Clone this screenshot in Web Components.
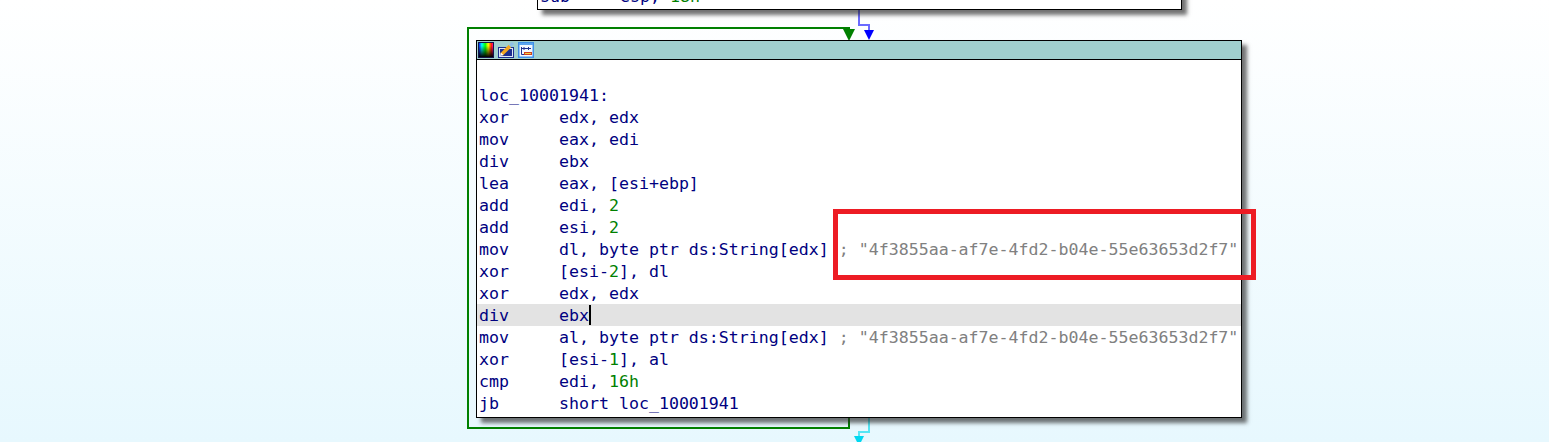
<!DOCTYPE html>
<html>
<head>
<meta charset="utf-8">
<style>
    html, body { margin: 0; height: 100%; }
    body { background: linear-gradient(#ffffff, #e7f8fe); overflow: hidden; }
</style>
</head>
<body>
<graph-view>
    <graph-edges></graph-edges>
    <graph-node style="left:537px; top:-40px; width:643px; height:48px">
        <asm-line></asm-line>
        <asm-line op="sub">esp, <n-um>18h</n-um></asm-line>
    </graph-node>
    <graph-node titled style="left:476px; top:40px; width:764px; height:376px">
        <asm-line></asm-line>
        <asm-line>loc_10001941:</asm-line>
        <asm-line op="xor">edx, edx</asm-line>
        <asm-line op="mov">eax, edi</asm-line>
        <asm-line op="div">ebx</asm-line>
        <asm-line op="lea">eax, [esi+ebp]</asm-line>
        <asm-line op="add">edi, <n-um>2</n-um></asm-line>
        <asm-line op="add">esi, <n-um>2</n-um></asm-line>
        <asm-line op="mov" note='; "4f3855aa-af7e-4fd2-b04e-55e63653d2f7"'>dl, byte ptr ds:String[edx]</asm-line>
        <asm-line op="xor">[esi-<n-um>2</n-um>], dl</asm-line>
        <asm-line op="xor">edx, edx</asm-line>
        <asm-line op="div" current caret>ebx</asm-line>
        <asm-line op="mov" note='; "4f3855aa-af7e-4fd2-b04e-55e63653d2f7"'>al, byte ptr ds:String[edx]</asm-line>
        <asm-line op="xor">[esi-<n-um>1</n-um>], al</asm-line>
        <asm-line op="cmp">edi, <n-um>16h</n-um></asm-line>
        <asm-line op="jb">short loc_10001941</asm-line>
    </graph-node>
    <red-mark></red-mark>
</graph-view>

<script>
class GraphView extends HTMLElement {
    constructor() {
        super();
        this.attachShadow({ mode: 'open' }).innerHTML = `
            <style>
                :host { display: block; position: relative; width: 1549px; height: 442px; overflow: hidden;
                    font-family: "DejaVu Sans Mono", "Liberation Mono", monospace; font-size: 16.6px; color: #000080; }
            </style>
            <slot></slot>`;
    }
}

class GraphEdges extends HTMLElement {
    constructor() {
        super();
        this.attachShadow({ mode: 'open' }).innerHTML = `
            <style>
                :host { position: absolute; left: 0; top: 0; }
                svg { display: block; }
            </style>
            <svg width="1549" height="442" fill="none" stroke-width="2">
                <path d="M849 418V428H468V28H849V33" stroke="#008000"/>
                <polygon points="843,29 855,29 849,41" fill="#008000"/>
                <path d="M859 9V25H869V32" stroke="#6a6aff"/>
                <polygon points="864,30 874,30 869,40" fill="#0000ff"/>
                <path d="M869 418V432H859V437" stroke="#55e6f5"/>
                <polygon points="854,436 864,436 859,446" fill="#00d8f0"/>
            </svg>`;
    }
}

class GraphNode extends HTMLElement {
    constructor() {
        super();
        this.attachShadow({ mode: 'open' }).innerHTML = `
            <style>
                :host { position: absolute; display: flex; flex-direction: column; background: #fff;
                    border: 1px solid #000; box-shadow: 5px 5px 4px rgba(40,40,40,.65); }
                .title { display: none; align-items: center; gap: 4px; height: 18px; padding-left: 1px;
                    background: #a0d0ce; border-bottom: 1px solid #000; }
                :host([titled]) .title { display: flex; }
                .body { padding: 2px 0 0 0; }
                svg { display: block; }
            </style>
            <div class="title">
                <svg width="16" height="16" viewBox="0 0 16 16">
                    <defs>
                        <linearGradient id="hue">
                            <stop offset="0" stop-color="#0000ff"/><stop offset=".22" stop-color="#00ffff"/>
                            <stop offset=".45" stop-color="#00ff00"/><stop offset=".65" stop-color="#ffff00"/>
                            <stop offset=".85" stop-color="#ff2000"/><stop offset="1" stop-color="#ff00c0"/>
                        </linearGradient>
                        <linearGradient id="dark" x1="0" y1="0" x2="0" y2="1">
                            <stop offset=".2" stop-color="#000" stop-opacity="0"/><stop offset="1" stop-color="#000"/>
                        </linearGradient>
                    </defs>
                    <rect x=".5" y=".5" width="15" height="15" fill="url(#hue)" stroke="#14144a"/>
                    <rect x="1" y="1" width="14" height="14" fill="url(#dark)"/>
                </svg>
                <svg width="16" height="16" viewBox="0 0 16 16">
                    <rect x=".5" y="5.5" width="15" height="10" fill="#dfe8f5" stroke="#1c2f8f"/>
                    <rect x="2" y="7" width="12" height="7" fill="#1c2f8f"/>
                    <path d="M3.5 12.5 L12 4" stroke="#f4a81e" stroke-width="3.4"/>
                    <path d="M12 4 L15 1" stroke="#8fc0ea" stroke-width="3"/>
                    <path d="M2 14 L2.8 10.5 L5.5 13Z" fill="#fff"/>
                </svg>
                <svg width="16" height="16" viewBox="0 0 16 16">
                    <rect x=".75" y=".75" width="14.5" height="14.5" fill="#f4f9ff" stroke="#3f8fe8" stroke-width="1.5"/>
                    <rect x="1" y="1" width="14" height="2" fill="#5aa5ee"/>
                    <path d="M3.5 5V12.5H6M3.5 6.5H13M5.5 5L7 6.5L5.5 8M10 5L11.5 6.5L10 8" stroke="#1c2f8f" fill="none"/>
                    <rect x="6" y="10" width="8" height="3" fill="#d04020"/>
                    <rect x="7" y="11" width="6" height="1" fill="#f0d040"/>
                </svg>
            </div>
            <div class="body"><slot></slot></div>`;
    }
}

class AsmLine extends HTMLElement {
    constructor() {
        super();
        // no whitespace between the tags, the line is white-space: pre
        this.attachShadow({ mode: 'open' }).innerHTML = '<style>'
            + ':host { display: block; height: 22px; line-height: 24px; padding-left: 2px; white-space: pre; }'
            + ':host([current]) { background: #e3e3e3; }'
            + '.caret { display: none; position: absolute; width: 2px; height: 20px; margin-top: 1px; background: #000; }'
            + ':host([caret]) .caret { display: inline-block; }'
            + '.op { display: inline-block; width: 80px; }'
            + '.note { color: #808080; }'
            + '</style><span class="op"></span><slot></slot><span class="caret"></span><span class="note"></span>';
    }

    connectedCallback() {
        const op = this.shadowRoot.querySelector('.op');
        if (this.hasAttribute('op')) op.textContent = this.getAttribute('op');
        else op.style.display = 'none';
        if (this.hasAttribute('note')) this.shadowRoot.querySelector('.note').textContent = ' ' + this.getAttribute('note');
    }
}

class NumberToken extends HTMLElement {
    constructor() {
        super();
        this.attachShadow({ mode: 'open' }).innerHTML = '<style>:host { color: #008000; }</style><slot></slot>';
    }
}

class RedMark extends HTMLElement {
    constructor() {
        super();
        this.attachShadow({ mode: 'open' }).innerHTML = `
            <style>
                :host { position: absolute; left: 833px; top: 209px; width: 413px; height: 61px; border: 5px solid #ed1c24; }
            </style>`;
    }
}

customElements.define('graph-view', GraphView);
customElements.define('graph-edges', GraphEdges);
customElements.define('graph-node', GraphNode);
customElements.define('asm-line', AsmLine);
customElements.define('n-um', NumberToken);
customElements.define('red-mark', RedMark);
</script>
</body>
</html>
